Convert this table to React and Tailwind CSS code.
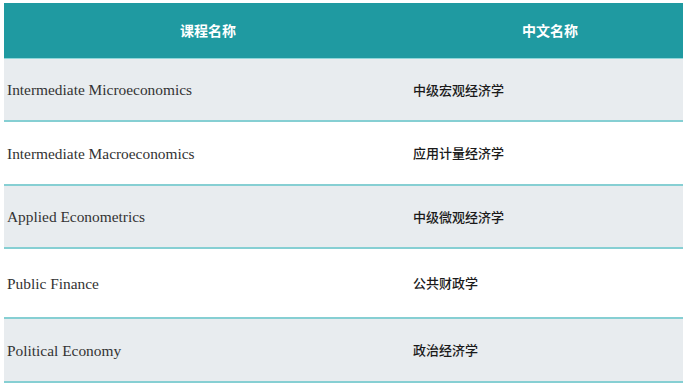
import React from "react";

const courses = [
  { en: "Intermediate Microeconomics", zh: "中级宏观经济学", h: "h-[63px]", shade: true },
  { en: "Intermediate Macroeconomics", zh: "应用计量经济学", h: "h-[64px]", shade: false },
  { en: "Applied Econometrics", zh: "中级微观经济学", h: "h-[63px]", shade: true },
  { en: "Public Finance", zh: "公共财政学", h: "h-[70px]", shade: false },
  { en: "Political Economy", zh: "政治经济学", h: "h-[64px]", shade: true },
];

const zhFont = "font-['Noto_Sans_CJK_SC',sans-serif]";

export default function App() {
  return (
    <div className="w-[683px] h-[386px] bg-white overflow-hidden pt-[3px] pl-[4px]">
      <div className="w-[684px]">
        {/* header */}
        <div className="flex h-[56px] bg-[#1f9aa1] text-white font-bold text-[14px] border-b border-[#8fd6d9]">
          <div className={`w-[408px] flex items-center justify-center ${zhFont}`}>课程名称</div>
          <div className={`flex-1 flex items-center justify-center ${zhFont}`}>中文名称</div>
        </div>

        {courses.map((c) => (
          <div
            key={c.en}
            className={`flex ${c.h} border-b-2 border-[#86cfd3] ${c.shade ? "bg-[#e8ecef]" : "bg-white"}`}
          >
            <div className="w-[408px] flex items-center pl-[3px] pt-[1px] text-[15.4px] text-[#333] font-['Liberation_Serif',serif]">
              {c.en}
            </div>
            <div className={`flex-1 flex items-center pl-[1px] text-[13px] font-medium text-[#1a1a1a] ${zhFont}`}>
              {c.zh}
            </div>
          </div>
        ))}
      </div>
    </div>
  );
}
